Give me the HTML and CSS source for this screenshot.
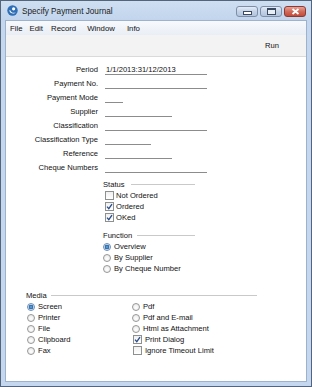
FILE: index.html
```html
<!DOCTYPE html>
<html lang="en">

<head>
    <meta charset="UTF-8">
    <meta name="viewport" content="width=device-width, initial-scale=1.0">
    <title>Specify Payment Journal</title>
    <link rel="stylesheet" href="styles.css">
</head>

<body>
    <div class="janela">
        <div class="barra-titulo">
            <svg class="icone-app" width="11" height="11" viewBox="0 0 11 11">
                <circle cx="5.5" cy="5.5" r="5.2" fill="#2f6fb8"/>
                <path d="M2.2 5.2 C2.6 8.4 6.8 9.6 9 7.2 C7 8.4 4.2 8 3.4 5.4 Z" fill="#fff"/>
                <circle cx="6.6" cy="3.8" r="1.6" fill="#fff"/>
            </svg>
            <span class="titulo">Specify Payment Journal</span>
            <div class="botoes-janela">
                <span class="bj"><i class="minimizar"></i></span>
                <span class="bj"><i class="maximizar"></i></span>
                <span class="bj fechar">
                    <svg width="9" height="7" viewBox="0 0 9 7">
                        <path d="M1.5 1 L7.5 6 M7.5 1 L1.5 6" stroke="#fff" stroke-width="1.8"/>
                    </svg>
                </span>
            </div>
        </div>

        <div class="cliente">
            <div class="menu">
                <span>File</span>
                <span>Edit</span>
                <span>Record</span>
                <span>Window</span>
                <span>Info</span>
            </div>
            <div class="ferramentas">
                <span class="run">Run</span>
            </div>

            <div class="formulario">
                <div class="campos">
                    <label>Period</label><div class="campo longo">1/1/2013:31/12/2013</div>
                    <label>Payment No.</label><div class="campo longo"></div>
                    <label>Payment Mode</label><div class="campo curto"></div>
                    <label>Supplier</label><div class="campo medio"></div>
                    <label>Classification</label><div class="campo longo"></div>
                    <label>Classification Type</label><div class="campo pequeno"></div>
                    <label>Reference</label><div class="campo medio"></div>
                    <label>Cheque Numbers</label><div class="campo longo"></div>
                </div>

                <div class="grupo status">
                    <div class="grupo-titulo">Status</div>
                    <div class="opcao caixa-opcao"><span class="caixa"></span>Not Ordered</div>
                    <div class="opcao caixa-opcao"><span class="caixa marcada"></span>Ordered</div>
                    <div class="opcao caixa-opcao"><span class="caixa marcada"></span>OKed</div>
                </div>

                <div class="grupo funcao">
                    <div class="grupo-titulo">Function</div>
                    <div class="opcao"><span class="radio ligado"></span>Overview</div>
                    <div class="opcao"><span class="radio"></span>By Supplier</div>
                    <div class="opcao"><span class="radio"></span>By Cheque Number</div>
                </div>

                <div class="grupo media">
                    <div class="grupo-titulo">Media</div>
                    <div class="colunas">
                        <div>
                            <div class="opcao"><span class="radio ligado"></span>Screen</div>
                            <div class="opcao"><span class="radio"></span>Printer</div>
                            <div class="opcao"><span class="radio"></span>File</div>
                            <div class="opcao"><span class="radio"></span>Clipboard</div>
                            <div class="opcao"><span class="radio"></span>Fax</div>
                        </div>
                        <div>
                            <div class="opcao"><span class="radio"></span>Pdf</div>
                            <div class="opcao"><span class="radio"></span>Pdf and E-mail</div>
                            <div class="opcao"><span class="radio"></span>Html as Attachment</div>
                            <div class="opcao caixa-opcao"><span class="caixa marcada"></span>Print Dialog</div>
                            <div class="opcao caixa-opcao"><span class="caixa"></span>Ignore Timeout Limit</div>
                        </div>
                    </div>
                </div>
            </div>
        </div>
    </div>
</body>

</html>
```

FILE: styles.css
```css
body {
    margin: 0;
    background-color: #fff;
    font-family: "Liberation Sans", Arial, sans-serif;
    font-size: 7.6px;
    color: #111;
}

.janela {
    width: 312px;
    height: 387px;
    box-sizing: border-box;
    border: 1px solid #54647a;
    background-color: #c4d7ee;
    padding: 0 4px 4px 4px;
    display: flex;
    flex-direction: column;
}

.barra-titulo {
    height: 19px;
    display: flex;
    align-items: center;
    background: linear-gradient(#cfdff2, #c2d5ec);
    margin: 0 -4px;
    padding: 0 5px 0 6px;
}

.icone-app {
    margin-right: 4px;
}

.titulo {
    font-size: 8.2px;
    color: #1a1a1a;
    flex: 1;
    padding-top: 1px;
}

.botoes-janela {
    display: flex;
    gap: 2px;
    margin-top: 2px;
}

.bj {
    width: 22px;
    height: 11px;
    box-sizing: border-box;
    border: 1px solid #7d8ea8;
    border-radius: 3px;
    background: linear-gradient(#e4ecf6, #c3d2e6 50%, #b3c4dc);
    display: flex;
    align-items: center;
    justify-content: center;
}

.minimizar {
    width: 7px;
    height: 2px;
    margin-top: 3px;
    border: 1px solid #3b4a60;
    background-color: #fff;
}

.maximizar {
    width: 7px;
    height: 4px;
    border: 1px solid #3b4a60;
    border-top-width: 2px;
    background-color: #e8eef6;
}

.fechar {
    border-color: #8d3a32;
    background: linear-gradient(#e6a296, #d06a5a 50%, #c34a3b);
}

.cliente {
    flex: 1;
    border: 1px solid #9db2cd;
    background-color: #fff;
    display: flex;
    flex-direction: column;
}

.menu {
    height: 14px;
    display: flex;
    align-items: center;
    background: linear-gradient(#f7f9fc, #e9eef5);
    padding-left: 4px;
    font-size: 7.8px;
}

.menu span {
    margin-right: 7px;
}

.menu span:nth-child(2) {
    margin-right: 8px;
}

.menu span:nth-child(3) {
    margin-right: 11px;
}

.menu span:nth-child(4) {
    margin-right: 12px;
}

.ferramentas {
    height: 21px;
    background-color: #f3f3f4;
    border-bottom: 1px solid #dadada;
    display: flex;
    align-items: center;
    justify-content: flex-end;
    padding-right: 27px;
}

.formulario {
    padding-top: 6px;
}

.campos {
    display: grid;
    grid-template-columns: 92px auto;
    column-gap: 7px;
    grid-auto-rows: 14px;
}

.campos label {
    text-align: right;
    line-height: 14px;
}

.campo {
    height: 12px;
    box-sizing: border-box;
    border-bottom: 1px solid #8c8c8c;
    line-height: 14px;
    padding-left: 1px;
}

.longo {
    width: 102px;
}

.medio {
    width: 67px;
}

.pequeno {
    width: 46px;
}

.curto {
    width: 18px;
}

.grupo {
    margin-left: 97px;
    width: 92px;
}

.grupo-titulo {
    height: 12px;
    display: flex;
    align-items: center;
    gap: 6px;
}

.grupo-titulo::after {
    content: "";
    flex: 1;
    border-top: 1px solid #c9c9c9;
    margin-top: 1px;
}

.status {
    margin-top: 3px;
}

.funcao {
    margin-top: 6px;
}

.funcao .grupo-titulo {
    gap: 5px;
}

.media {
    margin-top: 15px;
    margin-left: 20px;
    width: 231px;
}

.media .grupo-titulo {
    gap: 4px;
}

.colunas {
    display: grid;
    grid-template-columns: 105px auto;
    padding-left: 1px;
}

.opcao {
    height: 11px;
    display: flex;
    align-items: center;
    gap: 3px;
    white-space: nowrap;
}

.caixa-opcao {
    padding-left: 2px;
    gap: 2px;
}

.colunas .caixa-opcao {
    padding-left: 1px;
    gap: 3px;
}

.caixa {
    width: 9px;
    height: 9px;
    box-sizing: border-box;
    border: 1px solid #8e8f8f;
    background: linear-gradient(#f0f0f0, #fff);
}

.caixa.marcada {
    background:
        url("data:image/svg+xml;utf8,<svg xmlns='http://www.w3.org/2000/svg' width='7' height='7' viewBox='0 0 7 7'><path d='M1 3.6 L2.8 5.6 L6 1.2' fill='none' stroke='%23274d8c' stroke-width='1.3'/></svg>") no-repeat center,
        linear-gradient(#f0f0f0, #fff);
}

.radio {
    width: 8px;
    height: 8px;
    box-sizing: border-box;
    border-radius: 50%;
    border: 1px solid #979797;
    background: radial-gradient(circle at 50% 60%, #fff 0, #e4e4e4 100%);
}

.radio.ligado {
    border-color: #6e8db4;
    background: radial-gradient(circle, #6fb3ec 0, #1f62a8 2px, #d9e3ee 2.6px, #fff 100%);
}
```
